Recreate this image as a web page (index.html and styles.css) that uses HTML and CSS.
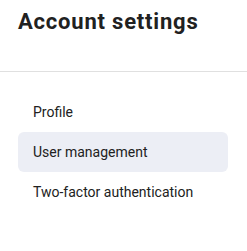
FILE: index.html
```html
<!DOCTYPE html>
<html lang="en">
<head>
    <meta charset="UTF-8">
    <meta name="viewport" content="width=device-width, initial-scale=1.0">
    <title>Account settings</title>
    <link rel="stylesheet" href="styles.css">
</head>
<body>
    <div class="page">
        <div class="heading">
            <h1>Account settings</h1>
        </div>
        <nav class="side_menu">
            <a href="#" class="menu_item">Profile</a>
            <a href="#" class="menu_item active">User management</a>
            <a href="#" class="menu_item">Two-factor authentication</a>
        </nav>
    </div>
</body>
</html>
```

FILE: styles.css
```css
body {
    font-family: Roboto, "Liberation Sans", sans-serif;
    margin: 0;
    padding: 0;
    background-color: #ffffff;
    color: #212121;
}

.heading {
    padding: 8px 18px 0;
    height: 63px;
    border-bottom: 1px solid #e0e0e0;
    box-sizing: content-box;
}

.heading h1 {
    margin: 0;
    font-size: 22px;
    font-weight: 700;
    line-height: 28px;
    letter-spacing: 0.8px;
}

.side_menu {
    display: flex;
    flex-direction: column;
    padding: 20px 19px 0 18px;
}

.menu_item {
    display: flex;
    align-items: center;
    height: 40px;
    padding: 0 15px;
    font-size: 14px;
    color: #212121;
    text-decoration: none;
    border-radius: 6px;
}

.menu_item.active {
    background-color: #eceef5;
}
```
